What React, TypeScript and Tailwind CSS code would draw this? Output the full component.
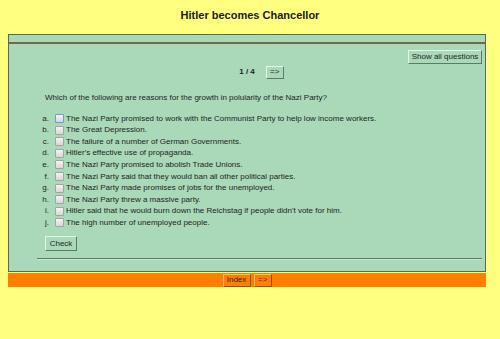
const options = [
  'The Nazi Party promised to work with the Communist Party to help low income workers.',
  'The Great Depression.',
  'The failure of a number of German Governments.',
  "Hitler's effective use of propaganda.",
  'The Nazi Party promised to abolish Trade Unions.',
  'The Nazi Party said that they would ban all other political parties.',
  'The Nazi Party made promises of jobs for the unemployed.',
  'The Nazi Party threw a massive party.',
  "Hitler said that he would burn down the Reichstag if people didn't vote for him.",
  'The high number of unemployed people.',
]

const letters = ['a', 'b', 'c', 'd', 'e', 'f', 'g', 'h', 'i', 'j']

// green quiz button with an outset bevel
const GreenButton = ({ children, className = '' }: { children: React.ReactNode; className?: string }) => (
  <button
    className={`flex items-center justify-center bg-[#a9d9b9] text-[8px] leading-none text-[#1e1e1e] border border-t-[#e4f6ea] border-l-[#e4f6ea] border-b-[#5d7b62] border-r-[#5d7b62] ${className}`}
  >
    {children}
  </button>
)

const OrangeButton = ({ children, className = '' }: { children: React.ReactNode; className?: string }) => (
  <button
    className={`flex items-center justify-center h-[13px] bg-[#ff8000] text-[8px] leading-none text-[#3a2000] border border-t-[#ffbb77] border-l-[#ffbb77] border-b-[#9a4d00] border-r-[#9a4d00] ${className}`}
  >
    {children}
  </button>
)

export default function App() {
  return (
    <div
      className="min-h-[339px] w-[500px] bg-[#ffff80] text-[#1e1e1e]"
      style={{ fontFamily: '"Liberation Sans", Arial, sans-serif' }}
    >
      {/* Title */}
      <div className="flex h-[34px] justify-center pt-[8px]">
        <h1 className="text-[11px] font-bold leading-[14px] text-[#1a1a1a]">Hitler becomes Chancellor</h1>
      </div>

      <div className="ml-2 w-[478px]">
        {/* Top strip */}
        <div className="h-[10px] border-x border-t border-[#566b56] border-b-2 border-b-[#76693c] bg-[#a9d9b9]" />

        {/* Question panel */}
        <div className="border-x border-b border-[#566b56] bg-[#a9d9b9] pb-[11px]">
          <div className="flex justify-end pr-[3px] pt-[6px]">
            <GreenButton className="h-[14px] w-[74px]">Show all questions</GreenButton>
          </div>

          <div className="mt-[1px] grid h-[14px] grid-cols-[1fr_auto_1fr] items-center">
            <div />
            <span className="text-[8px] font-bold leading-none">1 / 4</span>
            <div className="flex">
              <GreenButton className="ml-[11px] h-[13px] w-[18px]">=&gt;</GreenButton>
            </div>
          </div>

          <p className="mt-[13px] pl-[36px] text-[8px] leading-[11.5px]">
            Which of the following are reasons for the growth in polularity of the Nazi Party?
          </p>

          <ul className="mt-[9.5px]">
            {options.map((text, i) => (
              <li key={i} className="flex h-[11.56px] items-center text-[8px] leading-none">
                <span className="w-[40px] text-right">{letters[i]}.</span>
                <span
                  className={`ml-[6px] h-[9px] w-[9px] rounded-[1px] border bg-gradient-to-b from-[#f4f4f4] to-[#d6d6d6] ${
                    i === 0 ? 'border-[#6d9ad2]' : 'border-[#a3a3a3]'
                  }`}
                />
                <span className="ml-[2px]">{text}</span>
              </li>
            ))}
          </ul>

          <div className="mt-[8px] pl-[36px]">
            <GreenButton className="h-[15px] w-[32px]">Check</GreenButton>
          </div>

          <div className="ml-[28px] mr-[3px] mt-[7px] h-[2px] border-b border-b-[#c4e8d0] bg-[#5d7b62]" />
        </div>

        {/* Navigation bar */}
        <div className="mt-[1px] flex h-[14px] items-center justify-center gap-[3px] bg-[#ff8000]">
          <OrangeButton className="w-[28px]">Index</OrangeButton>
          <OrangeButton className="w-[18px] text-[#5a3000]">=&gt;</OrangeButton>
        </div>
      </div>
    </div>
  )
}
